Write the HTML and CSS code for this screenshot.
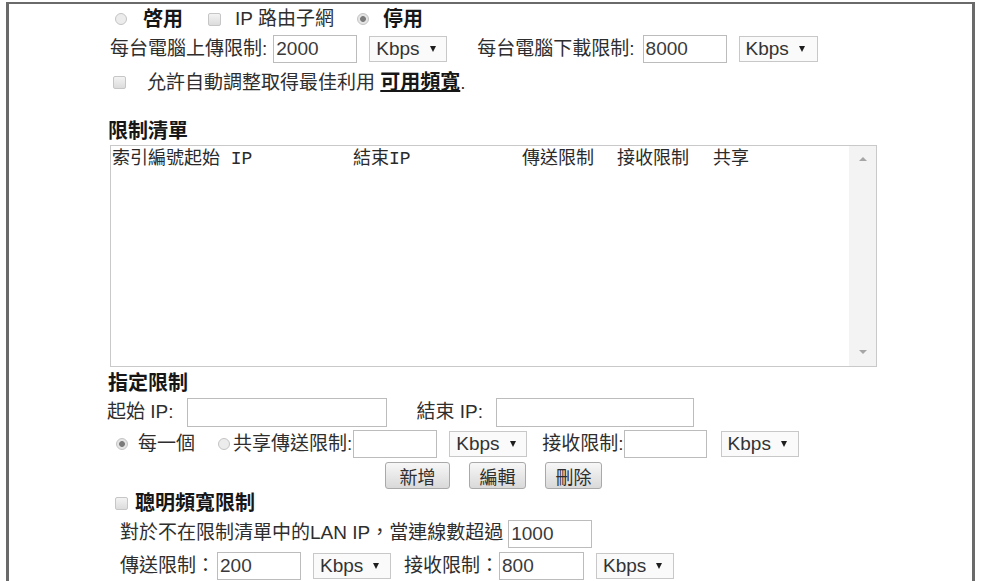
FILE: index.html
```html
<!DOCTYPE html>
<html lang="zh-Hant">
<head>
<meta charset="utf-8">
<title>頻寬限制</title>
<link rel="stylesheet" href="styles.css">
</head>
<body>
<div class="frame">
  <div class="form">
    <div class="row r1">
      <input type="radio" class="rd" name="mode">
      <b class="bd m-b1">啓用</b>
      <input type="checkbox" class="cb m-cb1">
      <span class="m-o2">IP 路由子網</span>
      <input type="radio" class="rd m-rd2" name="mode" checked>
      <b class="bd m-b3">停用</b>
    </div>
    <div class="row r2">
      <span class="lbl">每台電腦上傳限制:</span>
      <input type="text" class="tx w84 m-in1" value="2000">
      <span class="sel m-sel1">Kbps<i class="caret"></i></span>
      <span class="lbl m-lbl2">每台電腦下載限制:</span>
      <input type="text" class="tx w84 m-in2" value="8000">
      <span class="sel m-sel2">Kbps<i class="caret"></i></span>
    </div>
    <div class="row r3">
      <input type="checkbox" class="cb">
      <span class="m-auto">允許自動調整取得最佳利用 <b class="bd link">可用頻寬</b>.</span>
    </div>

    <div class="row head h-list"><b class="bd">限制清單</b></div>
    <div class="listbox">
      <div class="lb-body">
        <div class="lb-head">
          <span class="c1">索引編號起始 IP</span>
          <span class="c2">結束IP</span>
          <span class="c3">傳送限制</span>
          <span class="c4">接收限制</span>
          <span class="c5">共享</span>
        </div>
      </div>
      <div class="lb-scroll"><i class="arr up"></i><i class="arr down"></i></div>
    </div>

    <div class="row head h-spec"><b class="bd">指定限制</b></div>
    <div class="row r-ip">
      <span class="lbl">起始 IP:</span>
      <input type="text" class="tx w200 m-ip1" value="">
      <span class="lbl m-lbl-end">結束 IP:</span>
      <input type="text" class="tx w198 m-ip2" value="">
    </div>
    <div class="row r-each">
      <input type="radio" class="rd" name="share" checked>
      <span class="m-each">每一個</span>
      <input type="radio" class="rd m-rd-share" name="share">
      <span class="m-share">共享傳送限制:</span>
      <input type="text" class="tx w84 m-in-share" value="">
      <span class="sel m-sel1">Kbps<i class="caret"></i></span>
      <span class="m-recv">接收限制:</span>
      <input type="text" class="tx w83" value="">
      <span class="sel m-sel3">Kbps<i class="caret"></i></span>
    </div>
    <div class="row r-btn">
      <button type="button" class="btn wide">新增</button>
      <button type="button" class="btn">編輯</button>
      <button type="button" class="btn">刪除</button>
    </div>

    <div class="row r-smart">
      <input type="checkbox" class="cb">
      <b class="bd m-smart">聰明頻寬限制</b>
    </div>
    <div class="row r-lan">
      <span>對於不在限制清單中的LAN IP，當連線數超過</span>
      <input type="text" class="tx w84 m-lan" value="1000">
    </div>
    <div class="row r-rate">
      <span>傳送限制：</span>
      <input type="text" class="tx w84 m-rate1" value="200">
      <span class="sel m-sel1">Kbps<i class="caret"></i></span>
      <span class="m-recv2">接收限制：</span>
      <input type="text" class="tx w85 m-rate2" value="800">
      <span class="sel m-sel1">Kbps<i class="caret"></i></span>
    </div>
  </div>
</div>
</body>
</html>
```
FILE: styles.css
```css
html, body {
  margin: 0;
  height: 581px;
  overflow: hidden;
  background: #ffffff;
}
body {
  font-family: "Liberation Sans", "Noto Sans CJK TC", sans-serif;
  font-size: 19px;
  line-height: 1.2;
  color: #2e2e2e;
}
.frame {
  margin: 2px 0 0 6px;
  width: 969px;
  height: 579px;
  box-sizing: border-box;
  border-style: solid;
  border-color: #6a6a6a;
  border-width: 2px 3px 0 3px;
  padding-left: 101px;
}
.form {
  width: 767px;
}
.row {
  display: flex;
  align-items: center;
  white-space: nowrap;
}
.bd {
  font-weight: bold;
  font-size: 20px;
  color: #161616;
}
.link {
  text-decoration: underline;
}

/* controls */
.rd {
  -webkit-appearance: none;
  appearance: none;
  margin: 0;
  width: 12px;
  height: 12px;
  box-sizing: border-box;
  border-radius: 50%;
  border: 1px solid #c4c4c4;
  background: #ececec;
  flex: none;
}
.rd:checked {
  background: radial-gradient(circle, #7a7a7a 0 2.5px, #e4e4e4 3.3px);
}
.cb {
  -webkit-appearance: none;
  appearance: none;
  margin: 0;
  width: 13px;
  height: 13px;
  box-sizing: border-box;
  border: 1px solid #c6c6c6;
  border-radius: 2px;
  background: linear-gradient(#f3f3f3, #dcdcdc);
  flex: none;
}
.tx {
  box-sizing: border-box;
  height: 28px;
  margin: 0;
  padding: 0 2px;
  border: 1px solid #bcbcbc;
  font-family: "Liberation Sans", sans-serif;
  font-size: 19px;
  color: #3a3a3a;
  background: #fff;
  outline: none;
  flex: none;
}
.w83 { width: 83px; }
.w84 { width: 84px; }
.w85 { width: 85px; }
.w198 { width: 198px; height: 29px; }
.w200 { width: 200px; height: 29px; }
.sel {
  box-sizing: border-box;
  display: inline-flex;
  align-items: center;
  width: 78px;
  height: 26px;
  padding-left: 6px;
  border: 1px solid #c8c8c8;
  background: #fafafa;
  font-size: 19px;
  color: #333;
  flex: none;
}
.caret {
  display: block;
  width: 0;
  height: 0;
  margin-left: 10px;
  border-left: 3.5px solid transparent;
  border-right: 3.5px solid transparent;
  border-top: 6px solid #1e1e1e;
}
.btn {
  box-sizing: border-box;
  width: 57px;
  height: 27px;
  padding: 0;
  margin: 0;
  border: 1px solid #a9a9a9;
  border-radius: 3px;
  background: linear-gradient(#f7f7f7, #d9d9d9);
  font-family: "Liberation Sans", "Noto Sans CJK TC", sans-serif;
  font-size: 18px;
  color: #2e2e2e;
}
.btn.wide { width: 65px; }

/* rows */
.r1 { height: 30px; padding-left: 5px; }
.m-b1 { margin-left: 16px; }
.m-cb1 { margin-left: 25px; }
.m-o2 { margin-left: 14px; }
.m-rd2 { margin-left: 23px; }
.m-b3 { margin-left: 14px; }

.r2 { height: 30px; }
.m-in1 { margin-left: 6px; }
.m-sel1 { margin-left: 12px; }
.m-lbl2 { margin-left: 30px; }
.m-in2 { margin-left: 8px; }
.m-sel2 { margin-left: 12px; width: 79px; }

.r3 { margin-top: 2px; height: 32px; padding-left: 3px; }
.m-auto { margin-left: 21px; }

.head { height: 22px; margin-left: -2px; }
.h-list { margin-top: 22px; }
.h-spec { margin-top: 5px; }

.listbox {
  margin-top: 3px;
  height: 222px;
  box-sizing: border-box;
  border: 1px solid #c9c9c9;
  display: flex;
}
.lb-body {
  flex: 1;
  padding: 3px 0 0 1px;
}
.lb-head {
  display: flex;
  font-family: "Liberation Mono", "Noto Sans CJK TC", monospace;
  font-size: 18px;
  line-height: 20px;
  color: #2a2a2a;
  white-space: pre;
}
.c1 { width: 241px; }
.c2 { width: 169px; }
.c3 { width: 95px; }
.c4 { width: 96px; }
.lb-scroll {
  width: 27px;
  background: #f3f3f3;
  display: flex;
  flex-direction: column;
  justify-content: space-between;
  align-items: center;
  padding: 11px 0 12px;
}
.arr {
  display: block;
  width: 0;
  height: 0;
  border-left: 4px solid transparent;
  border-right: 4px solid transparent;
}
.up { border-bottom: 4px solid #a6a6a6; }
.down { border-top: 4px solid #a6a6a6; }

.r-ip { margin-top: 3px; height: 31px; margin-left: -3px; }
.m-ip1 { margin-left: 13px; }
.m-lbl-end { margin-left: 30px; }
.m-ip2 { margin-left: 13px; }

.r-each { margin-top: 1px; height: 30px; padding-left: 6px; }
.m-each { margin-left: 10px; }
.m-rd-share { margin-left: 23px; }
.m-share { margin-left: 3px; }
.m-in-share { margin-left: 1px; }
.m-recv { margin-left: 15px; }
.m-sel3 { margin-left: 14px; }

.r-btn { margin-top: 2px; height: 29px; justify-content: center; gap: 19px; }

.r-smart { margin-top: 2px; height: 22px; padding-left: 5px; }
.m-smart { margin-left: 7px; }

.r-lan { margin-top: 4px; height: 31px; padding-left: 10px; }
.m-lan { margin-left: 5px; }
.r-rate { margin-top: 2px; height: 30px; padding-left: 10px; }
.m-rate1 { margin-left: 2px; }
.m-recv2 { margin-left: 13px; }
.m-rate2 { margin-left: 0; }
```
